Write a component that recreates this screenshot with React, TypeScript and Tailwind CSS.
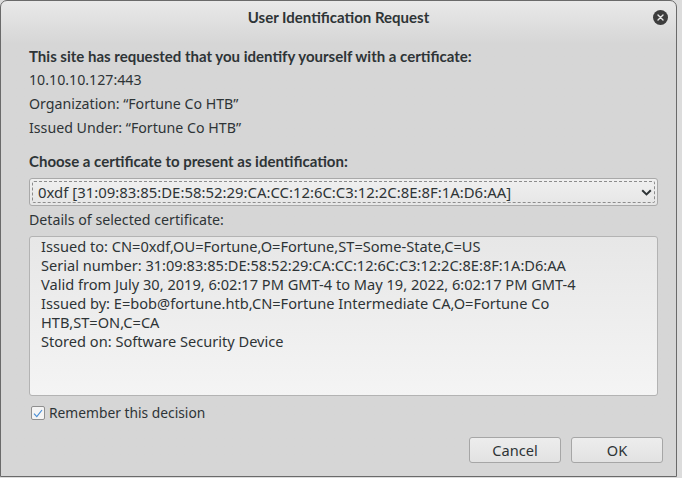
import React from 'react'

const details = [
  'Issued to: CN=0xdf,OU=Fortune,O=Fortune,ST=Some-State,C=US',
  'Serial number: 31:09:83:85:DE:58:52:29:CA:CC:12:6C:C3:12:2C:8E:8F:1A:D6:AA',
  'Valid from July 30, 2019, 6:02:17 PM GMT-4 to May 19, 2022, 6:02:17 PM GMT-4',
  'Issued by: E=bob@fortune.htb,CN=Fortune Intermediate CA,O=Fortune Co',
  'HTB,ST=ON,C=CA',
  'Stored on: Software Security Device',
]

const TitleBar = () => (
  <div className="relative flex h-[33px] shrink-0 items-center justify-center">
    <span className="font-['Lato',sans-serif] text-[15px] font-bold text-[#2e3436]">User Identification Request</span>
    {/* close button */}
    <div className="absolute right-[8px] top-[9px] flex h-[15px] w-[15px] items-center justify-center rounded-full bg-[#3d3d3d]">
      <svg width="7" height="7" viewBox="0 0 7 7">
        <path d="M1 1L6 6M6 1L1 6" stroke="#e8e8e8" strokeWidth="1.4" strokeLinecap="round" />
      </svg>
    </div>
  </div>
)

const App = () => (
  <div className="flex h-[478px] w-[682px] items-start bg-[#dcdcdc] font-['Noto_Sans',sans-serif] text-[14.2px] text-[#2e3436]">
    <div className="flex h-[477px] w-[677px] flex-col rounded-t-[7px] border border-[#6a6a6a] bg-gradient-to-b from-[#e9e9e9] from-0% to-[#d6d6d6] to-[9%]">
      <TitleBar />
      <div className="flex flex-1 flex-col pl-[28px] pr-[18px] pt-[10px] leading-[24px]">
        <div className="font-['Lato',sans-serif] text-[15px] font-bold">This site has requested that you identify yourself with a certificate:</div>
        <div>10.10.10.127:443</div>
        <div>Organization: “Fortune Co HTB”</div>
        <div>Issued Under: “Fortune Co HTB”</div>

        <div className="mt-[9px] font-['Lato',sans-serif] text-[15px] font-bold">Choose a certificate to present as identification:</div>
        <div className="mt-[5px] h-[28px] rounded-[3px] border border-[#a9a9a9] bg-gradient-to-b from-[#f0f0f0] to-[#e6e6e6] p-[2px]">
          <div className="flex h-full items-center justify-between rounded-[2px] border border-dashed border-[#8c8c8c] pl-[5px] pr-[2px] text-[14.9px] leading-[20px]">
            <span>0xdf [31:09:83:85:DE:58:52:29:CA:CC:12:6C:C3:12:2C:8E:8F:1A:D6:AA]</span>
            <svg width="11" height="7" viewBox="0 0 11 7">
              <path d="M1.2 1.2L5.5 5.4L9.8 1.2" fill="none" stroke="#2e3436" strokeWidth="2" />
            </svg>
          </div>
        </div>

        <div className="mt-[2px]">Details of selected certificate:</div>
        <div className="mt-[4px] h-[160px] rounded-[3px] border border-[#b3b3b3] bg-gradient-to-b from-[#e7e7e7] to-[#f4f4f4] px-[11px] pt-0 text-[14.6px] leading-[19px]">
          {details.map(line => (
            <div key={line}>{line}</div>
          ))}
        </div>

        <label className="mt-[5px] flex items-center gap-[4px] leading-[24px]">
          <span className="ml-[2px] flex h-[14px] w-[14px] items-center justify-center rounded-[2px] border border-[#8f8f8f] bg-[#f4f4f4]">
            <svg width="10" height="9" viewBox="0 0 10 9">
              <path d="M1 4.6L3.8 7.6L9 1" fill="none" stroke="#4a8fd6" strokeWidth="1.2" />
            </svg>
          </span>
          <span className="text-[13.8px]">Remember this decision</span>
        </label>

        <div className="mt-[12px] flex justify-end gap-[10px]">
          <button className="h-[26px] w-[92px] rounded-[3px] border border-[#a6a6a6] bg-gradient-to-b from-[#ededed] to-[#e2e2e2] text-[14.6px] text-[#2e3436]">
            Cancel
          </button>
          <button className="mr-[-5px] h-[26px] w-[92px] rounded-[3px] border border-[#a6a6a6] bg-gradient-to-b from-[#ededed] to-[#e2e2e2] text-[14.6px] text-[#2e3436]">
            OK
          </button>
        </div>
      </div>
    </div>
  </div>
)

export default App
